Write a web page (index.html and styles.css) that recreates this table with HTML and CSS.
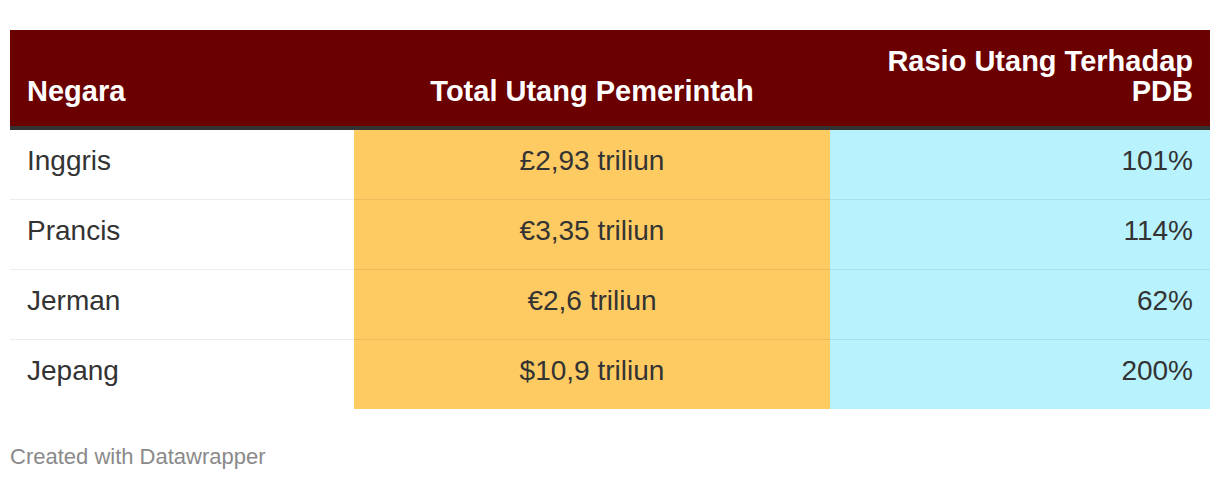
FILE: index.html
```html
<!DOCTYPE html>
<html lang="id">
<head>
<meta charset="utf-8">
<title>Utang Pemerintah</title>
<link rel="stylesheet" href="styles.css">
</head>
<body>
<div class="chart">
  <table class="dw-table">
    <thead>
      <tr>
        <th class="c-left">Negara</th>
        <th class="c-center">Total Utang Pemerintah</th>
        <th class="c-right">Rasio Utang Terhadap<br>PDB</th>
      </tr>
    </thead>
    <tbody>
      <tr>
        <td class="c-left">Inggris</td>
        <td class="c-center debt">£2,93 triliun</td>
        <td class="c-right ratio">101%</td>
      </tr>
      <tr>
        <td class="c-left">Prancis</td>
        <td class="c-center debt">€3,35 triliun</td>
        <td class="c-right ratio">114%</td>
      </tr>
      <tr>
        <td class="c-left">Jerman</td>
        <td class="c-center debt">€2,6 triliun</td>
        <td class="c-right ratio">62%</td>
      </tr>
      <tr>
        <td class="c-left">Jepang</td>
        <td class="c-center debt">$10,9 triliun</td>
        <td class="c-right ratio">200%</td>
      </tr>
    </tbody>
  </table>
  <div class="footer">Created with Datawrapper</div>
</div>
</body>
</html>
```
FILE: styles.css
```css
html, body {
  margin: 0;
  padding: 0;
  background: #ffffff;
}

.chart {
  padding: 30px 10px 0 10px;
  font-family: "Liberation Sans", Arial, Helvetica, sans-serif;
  color: #333333;
}

.dw-table {
  width: 1200px;
  border-collapse: separate;
  border-spacing: 0;
  table-layout: fixed;
}

.dw-table th,
.dw-table td {
  box-sizing: border-box;
}

.dw-table th:nth-child(1),
.dw-table td:nth-child(1) { width: 344px; }
.dw-table th:nth-child(2),
.dw-table td:nth-child(2) { width: 476px; }
.dw-table th:nth-child(3),
.dw-table td:nth-child(3) { width: 380px; }

.dw-table th {
  background: #6b0000;
  color: #ffffff;
  font-weight: bold;
  font-size: 29px;
  line-height: 30px;
  vertical-align: bottom;
  padding: 16px 17px 20px 17px;
  border-bottom: 4px solid #333333;
}

.dw-table td {
  font-size: 28px;
  line-height: 30px;
  padding: 16px 17px 23px 17px;
  border-bottom: 1px solid rgba(0, 0, 0, 0.07);
  vertical-align: middle;
}

.dw-table tbody tr:last-child td {
  border-bottom: none;
}

.c-left { text-align: left; }
.c-center { text-align: center; }
.c-right { text-align: right; }

.debt { background: #fecb63; }
.ratio { background: #b7f2fd; }

.footer {
  margin-top: 36px;
  font-size: 22px;
  color: #8a8a8a;
  line-height: 24px;
}
```
